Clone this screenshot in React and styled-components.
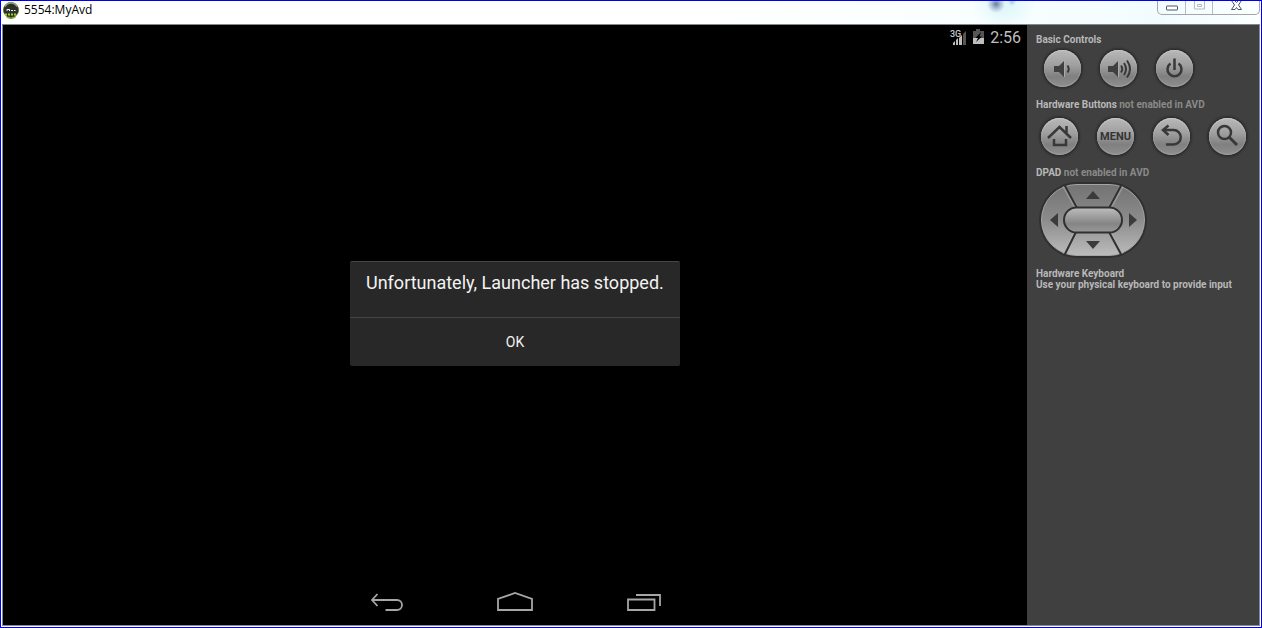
import React from "react";
import styled, { createGlobalStyle } from "styled-components";

const GlobalStyle = createGlobalStyle`
  *, *::before, *::after { box-sizing: border-box; }
  body { margin: 0; background: #fff; }
  button { font: inherit; color: inherit; margin: 0; padding: 0; border: 0; background: none; }
  svg { display: block; }
`;

const Window = styled.div`
  display: flex;
  flex-direction: column;
  min-height: 100vh;
  padding: 0 1px 1px;
  border: 1px solid #0000f0;
  background: #fff;
  font-family: Roboto, "Liberation Sans", sans-serif;
`;

const TitleBar = styled.header`
  display: flex;
  align-items: flex-start;
  height: 23px;
  margin: 0 -1px;
  padding-left: 1px;
  background:
    radial-gradient(circle at calc(100% - 265px) 3px, rgba(70, 84, 125, 0.75) 0, rgba(110, 130, 170, 0.4) 5px, transparent 9px),
    radial-gradient(circle at calc(100% - 249px) 1px, rgba(120, 160, 210, 0.5) 0, transparent 4px),
    radial-gradient(ellipse 32px 24px at calc(100% - 257px) 4px, #e0f7fa 20%, transparent 100%),
    linear-gradient(90deg, #fff 55%, #f8feff 80%, #f2fcff 92%, #fbffff 100%);
`;

const Title = styled.h1`
  margin: 0 auto 0 4px;
  font: 400 12px/18px "Open Sans", "Noto Sans", sans-serif;
  color: #000;
`;

const WindowControls = styled.div`
  display: flex;
  height: 14px;
  margin-right: 1px;
  border: 1px solid #a3a5aa;
  border-top: 0;
  border-radius: 0 0 5px 5px;
`;

const WindowButton = styled.button`
  display: grid;
  place-items: start center;
  width: ${(p) => p.$width}px;
  & + & { border-left: 1px solid #b9bbc0; }
`;

const Body = styled.div`
  display: flex;
  flex: 1;
  border: 1px solid #868a86;
`;

const Screen = styled.main`
  display: flex;
  flex: 1;
  flex-direction: column;
  background: #000;
`;

const StatusBar = styled.div`
  display: flex;
  justify-content: flex-end;
  align-items: center;
  height: 25px;
  padding-right: 6px;
  color: #bebebe;
  font-size: 16px;
  line-height: 25px;
`;

const StatusIcons = styled.div`
  display: flex;
  gap: 6px;
  margin-right: 5px;
`;

const Stage = styled.div`
  display: grid;
  flex: 1;
  place-items: center;
`;

const Dialog = styled.section`
  width: 330px;
  background: #282828;
  border-top: 1px solid #464646;
  border-radius: 2px;
  color: #f3f3f3;
`;

const Message = styled.p`
  margin: 0;
  padding: 9px 16px 22px;
  font-size: 18px;
  line-height: 24px;
  white-space: nowrap;
`;

const OkButton = styled.button`
  display: block;
  width: 100%;
  height: 49px;
  border-top: 1px solid #464646;
  font-size: 14px;
`;

const NavBar = styled.nav`
  display: flex;
  justify-content: center;
  gap: 48px;
  height: 48px;
`;

const NavButton = styled.button`
  display: grid;
  place-items: center;
  width: 80px;
  height: 48px;
  padding-top: 2px;
`;

const Panel = styled.aside`
  flex: none;
  width: 232px;
  padding: 9px;
  background: #404040;
  color: #b8b8b8;
  font-size: 10px;
  font-weight: 700;
`;

const Heading = styled.h2`
  margin: 0;
  font-size: 10px;
  line-height: 12px;
`;

const Muted = styled.span`
  color: #8a8a8a;
`;

const ButtonRow = styled.div`
  display: flex;
  gap: 19px;
  padding: ${(p) => p.$above}px 0 12px ${(p) => p.$indent}px;
`;

const RoundButton = styled.button`
  display: grid;
  flex: none;
  place-items: center;
  width: 37px;
  height: 37px;
  border-radius: 50%;
  background: linear-gradient(#b8b8b8, #a0a0a0 40%, #808080 72%, #8e8e8e);
  box-shadow: inset 0 1px 1px #c6c6c6, inset 0 -1px 1px #a0a0a0, 0 0 2px 2px #2e2e2e;
  color: #343434;
  font-size: 11px;
  font-weight: 700;
`;

const Dpad = styled.div`
  position: relative;
  display: grid;
  grid-template: 1fr 24px 1fr / 1fr 58px 1fr;
  grid-template-areas: ". up ." "left center right" ". down .";
  width: 112px;
  height: 80px;
  margin: 1px 0 8px;
`;

const DpadArt = styled.svg`
  position: absolute;
  inset: 0;
`;

const DpadKey = styled.button`
  position: relative;
  grid-area: ${(p) => p.$area};
`;

const Note = styled.p`
  margin: 0;
  line-height: 11px;
  white-space: nowrap;
`;

const Stroke = ({ width = 2.5, children }) => (
  <svg width="28" height="28" viewBox="0 0 28 28" fill="none" stroke="#383838" strokeWidth={width} aria-hidden="true">
    {children}
  </svg>
);

const AppIcon = () => (
  <svg width="18" height="18" viewBox="0 0 18 18" aria-hidden="true">
    <circle cx="9" cy="9" r="7.5" fill="#2b3026" stroke="#5d7628" />
    <path d="M3 5.500a7 7 0 0 1 12 0" fill="none" stroke="#93a07c" strokeWidth="1.500" />
    <rect x="2" y="6" width="14" height="6" rx="1" fill="#2e322d" />
    <path d="M5 10V8.500h2.500V10M7.500 8.500V10M9 9.500h2M12 9.500h1.500" fill="none" stroke="#f2f2f2" />
    <path d="M3 13.500h12" stroke="#a2d42c" strokeWidth="2" strokeDasharray="2 1" />
    <path d="M4 15.500a7 7 0 0 0 10 0" fill="none" stroke="#7fa428" />
  </svg>
);

const ARROWS = [
  ["50,19 57,11 64,19", "up"],
  ["50,61 64,61 57,69", "down"],
  ["22,33 22,47 14,40", "left"],
  ["93,33 93,47 101,40", "right"],
];

const DpadDrawing = () => (
  <DpadArt width="112" height="80" viewBox="0 0 112 80" aria-hidden="true">
    <defs>
      <linearGradient id="pad" x1="0" y1="0" x2="0" y2="1">
        <stop offset="0" stopColor="#737373" />
        <stop offset="0.5" stopColor="#8c8c8c" />
        <stop offset="1" stopColor="#bcbcbc" />
      </linearGradient>
      <linearGradient id="pill" x1="0" y1="0" x2="0" y2="1">
        <stop offset="0" stopColor="#bebebe" />
        <stop offset="0.65" stopColor="#858585" />
        <stop offset="1" stopColor="#999" />
      </linearGradient>
    </defs>
    <rect x="3" y="2" width="108" height="76" rx="38" fill="#303030" />
    <rect x="5.5" y="4.5" width="103" height="71" rx="35.5" fill="url(#pad)" stroke="#a5a5a5" />
    <g stroke="#b0b0b0" strokeWidth="4">
      <path d="M28 6 41 29M86 6 73 29M40 51 28 74M73 51 86 74" opacity="0.5" />
      <path d="M28 4 41 28M86 4 73 28M40 52 28 76M73 52 86 76" stroke="#303030" strokeWidth="2" />
    </g>
    <rect x="28" y="27.5" width="58" height="25" rx="12.5" fill="url(#pill)" stroke="#303030" strokeWidth="2" />
    {ARROWS.map(([points, name]) => (
      <polygon key={name} points={points} fill="#3b3b3b" />
    ))}
  </DpadArt>
);

export default function App() {
  return (
    <>
      <GlobalStyle />
      <Window>
        <TitleBar>
          <AppIcon />
          <Title>5554:MyAvd</Title>
          <WindowControls>
            <WindowButton $width={27} aria-label="Minimize">
              <svg width="13" height="12" fill="#fff" stroke="#4f5463">
                <rect x="1.5" y="5" width="11" height="4" rx="0.5" />
              </svg>
            </WindowButton>
            <WindowButton $width={27} aria-label="Maximize">
              <svg width="13" height="12" fill="none" stroke="#b9bbc0">
                <path d="M1.500-.5h10v8.500h-10zM4.500 3.500h4v2h-4z" />
              </svg>
            </WindowButton>
            <WindowButton $width={47} aria-label="Close">
              <svg width="13" height="12" fill="#fff" stroke="#4f5463">
                <path d="M1.500-.5h3l2 2 2-2h3l-3 4.500 3 4.500h-3.500l-1.500-2-1.500 2H1.500l3-4.500z" />
              </svg>
            </WindowButton>
          </WindowControls>
        </TitleBar>
        <Body>
          <Screen>
            <StatusBar>
              <StatusIcons>
                <svg width="17" height="18" viewBox="0 0 17 18" role="img" aria-label="3G signal">
                  <text x="0" y="8" fontSize="9" fontWeight="500" fill="#c8c8c8">3G</text>
                  <path d="M3 16v-2l2-2v4zM6 16v-5l2-2v7zM9 16V9l3-3v10z" fill="#bebebe" />
                  <path d="M13 16V5l3-3v14z" fill="#555" />
                </svg>
                <svg width="12" height="18" viewBox="0 0 12 18" role="img" aria-label="Battery charging">
                  <path d="M0 2h3V0h4v2h4v7H0z" fill="#555" />
                  <path d="M0 9h11v6H0z" fill="#bebebe" />
                  <path d="M8 3 2.500 9H5l-2 4 6-5.500H6.500z" fill="#000" />
                </svg>
              </StatusIcons>
              <time>2:56</time>
            </StatusBar>
            <Stage>
              <Dialog role="alertdialog" aria-labelledby="message">
                <Message id="message">Unfortunately, Launcher has stopped.</Message>
                <OkButton>OK</OkButton>
              </Dialog>
            </Stage>
            <NavBar>
              <NavButton aria-label="Back">
                <svg width="34" height="20" viewBox="0 0 34 20" fill="none" stroke="#a6a6a6" strokeWidth="1.800">
                  <path d="M7.500 2 2 8l5.500 6M2 8h25a5 5 0 0 1 0 10H15.500" />
                </svg>
              </NavButton>
              <NavButton aria-label="Home">
                <svg width="36" height="20" viewBox="0 0 36 20" fill="none" stroke="#a6a6a6" strokeWidth="1.800">
                  <path d="M1 18V7l17-6 17 6v11z" />
                </svg>
              </NavButton>
              <NavButton aria-label="Recent apps">
                <svg width="36" height="20" viewBox="0 0 36 20" fill="none" stroke="#a6a6a6" strokeWidth="1.800">
                  <path d="M3 7.500h26.500V18H3zM11 3h24v11" />
                </svg>
              </NavButton>
            </NavBar>
          </Screen>
          <Panel>
            <Heading>Basic Controls</Heading>
            <ButtonRow $indent={8} $above={4}>
              <RoundButton aria-label="Volume down">
                <Stroke width={2}>
                  <path d="M5 11h5l5-5v16l-5-5H5z" fill="#404040" stroke="none" />
                  <path d="M15.500 6v16" stroke="#aaa" strokeWidth="1" />
                  <path d="M18.500 10.500q2.500 3.500 0 7" />
                </Stroke>
              </RoundButton>
              <RoundButton aria-label="Volume up">
                <Stroke width={2}>
                  <path d="M3 11h5l5-5v16l-5-5H3z" fill="#404040" stroke="none" />
                  <path d="M13.500 6v16" stroke="#aaa" strokeWidth="1" />
                  <path d="M16 10.500q2.500 3.500 0 7M19 8q4 6 0 12M22 5.500q6 8.500 0 17" />
                </Stroke>
              </RoundButton>
              <RoundButton aria-label="Power">
                <Stroke>
                  <path d="M9.500 8.500a7 7 0 1 0 8 0M13.500 3.500V15" />
                </Stroke>
              </RoundButton>
            </ButtonRow>
            <Heading>
              Hardware Buttons <Muted>not enabled in AVD</Muted>
            </Heading>
            <ButtonRow $indent={5} $above={7}>
              <RoundButton aria-label="Home">
                <Stroke>
                  <path d="M2 15 13.500 4 25 15M20.500 3v7M8 16v6h12v-6" />
                </Stroke>
              </RoundButton>
              <RoundButton>MENU</RoundButton>
              <RoundButton aria-label="Back">
                <Stroke>
                  <path d="M10.500 2.500 5 7l5.500 5M5 7h10.500a7.250 7.250 0 0 1 0 14.500H8" />
                </Stroke>
              </RoundButton>
              <RoundButton aria-label="Search">
                <Stroke>
                  <circle cx="10.500" cy="9.500" r="6.500" />
                  <path d="m15 14 8 8" strokeWidth="3" />
                </Stroke>
              </RoundButton>
            </ButtonRow>
            <Heading>
              DPAD <Muted>not enabled in AVD</Muted>
            </Heading>
            <Dpad>
              <DpadDrawing />
              {["up", "left", "center", "right", "down"].map((key) => (
                <DpadKey key={key} $area={key} aria-label={`DPAD ${key}`} />
              ))}
            </Dpad>
            <Note>Hardware Keyboard</Note>
            <Note>Use your physical keyboard to provide input</Note>
          </Panel>
        </Body>
      </Window>
    </>
  );
}
